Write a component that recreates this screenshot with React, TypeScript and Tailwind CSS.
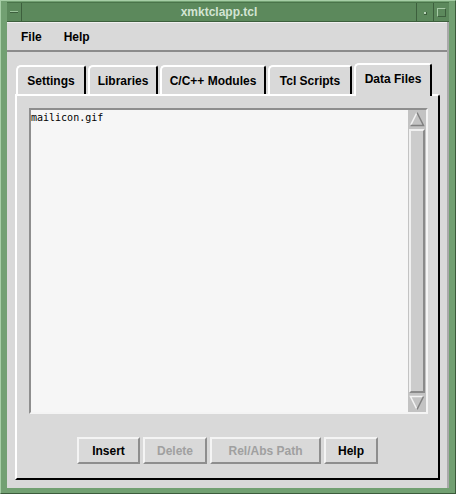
import React from "react";

const font = { fontFamily: '"Liberation Sans", Arial, sans-serif' };

function Tab({ label, w, selected }: { label: string; w: string; selected?: boolean }) {
  if (selected) {
    return (
      <div
        className={`${w} h-[33px] -mb-[2px] relative z-10 bg-[#d9d9d9] border-t-2 border-l-2 border-r-2 border-t-white border-l-white border-r-black rounded-tl-[5px] rounded-tr-[3px] flex items-center justify-center pb-[3px] text-[12px] font-bold text-black`}
      >
        {label}
      </div>
    );
  }
  return (
    <div
      className={`${w} h-[29px] bg-[#d9d9d9] border-t-2 border-l-2 border-r-2 border-t-white border-l-white border-r-black rounded-tl-[5px] rounded-tr-[3px] flex items-center justify-center pt-[1px] text-[12px] font-bold text-black`}
    >
      {label}
    </div>
  );
}

function Btn({ label, w, disabled }: { label: string; w: string; disabled?: boolean }) {
  return (
    <div
      className={`${w} h-[27px] bg-[#d9d9d9] border-2 border-t-[#f4f4f4] border-l-[#f4f4f4] border-b-[#8e8e8e] border-r-[#8e8e8e] flex items-center justify-center text-[12px] font-bold ${
        disabled ? "text-[#a0a0a0]" : "text-black"
      }`}
    >
      {label}
    </div>
  );
}

export default function App() {
  return (
    <div
      className="w-[456px] h-[494px] bg-[#72a072] border border-t-[#a6cea6] border-l-[#a6cea6] border-b-[#3c5c3c] border-r-[#3c5c3c] pl-[6px] pr-[6px] pt-[1px] pb-[5px] flex flex-col"
      style={font}
    >
      {/* title bar */}
      <div className="h-[20px] flex bg-[#5c895c] border-t border-t-[#4a744a] border-b border-b-[#3d5f3d]">
        <div className="w-[15px] border-r border-r-[#3d5f3d] flex items-center justify-center">
          <div className="w-[8px] h-[2px] bg-[#9cc49c] border-b border-b-[#3d5f3d]" />
        </div>
        <div className="flex-1 flex items-center justify-center text-[12px] font-bold text-[#d3e4d3]">
          xmktclapp.tcl
        </div>
        <div className="w-[17px] border-l border-l-[#3d5f3d] flex items-center justify-center">
          <div className="w-[3px] h-[3px] bg-[#b8d4b8] border-r border-b border-[#3d5f3d] mt-[2px]" />
        </div>
        <div className="w-[16px] border-l border-l-[#3d5f3d] flex items-center justify-center">
          <div className="w-[9px] h-[9px] border border-t-[#a8cca8] border-l-[#a8cca8] border-b-[#3d5f3d] border-r-[#3d5f3d]" />
        </div>
      </div>

      {/* content */}
      <div className="flex-1 bg-[#d9d9d9] flex flex-col border-r-2 border-r-[#a9a9a9]">
        {/* menu bar */}
        <div className="h-[30px] border-b-2 border-b-[#8b8b8b] border-t border-t-[#f0f0f0] flex items-center pl-[14px] text-[12px] font-bold text-black">
          <span>File</span>
          <span className="ml-[22px]">Help</span>
        </div>

        {/* tabs */}
        <div className="h-[42px] flex items-end pl-[9px] gap-[2px]">
          <Tab label="Settings" w="w-[70px]" />
          <Tab label="Libraries" w="w-[70px]" />
          <Tab label="C/C++ Modules" w="w-[106px]" />
          <Tab label="Tcl Scripts" w="w-[84px]" />
          <Tab label="Data Files" w="w-[78px]" selected />
        </div>

        {/* panel */}
        <div className="ml-[8px] w-[425px] h-[386px] border-2 border-t-white border-l-white border-r-black border-b-black rounded-tr-[3px] flex flex-col">
          <div className="mt-[12px] ml-[12px] w-[399px] h-[306px] border-2 border-t-[#8e8e8e] border-l-[#8e8e8e] border-b-[#f4f4f4] border-r-[#f4f4f4] flex">
            <div
              className="flex-1 bg-[#f6f6f6] pl-[0px] pt-[1px] text-[10px] leading-[13px] text-black"
              style={{ fontFamily: '"DejaVu Sans Mono", "Liberation Mono", monospace' }}
            >
              mailicon.gif
            </div>
            <div className="w-[18px] bg-[#c3c3c3] flex flex-col">
              <svg width="18" height="18" viewBox="0 0 18 18" className="block">
                <polyline points="2.5,15.5 9,2.5" stroke="#f4f4f4" strokeWidth="1.5" fill="none" />
                <polyline points="9,2.5 15.5,15.5 2.5,15.5" stroke="#808080" strokeWidth="1.5" fill="none" />
              </svg>
              <div className="flex-1 mx-[1px] my-[1px] bg-[#cccccc] border-2 border-t-[#f0f0f0] border-l-[#f0f0f0] border-b-[#8a8a8a] border-r-[#8a8a8a]" />
              <svg width="18" height="18" viewBox="0 0 18 18" className="block">
                <polyline points="15.5,2.5 2.5,2.5 9,15.5" stroke="#f4f4f4" strokeWidth="1.5" fill="none" />
                <polyline points="9,15.5 15.5,2.5" stroke="#808080" strokeWidth="1.5" fill="none" />
              </svg>
            </div>
          </div>
          <div className="mt-[23px] flex justify-center gap-[3px]">
            <Btn label="Insert" w="w-[63px]" />
            <Btn label="Delete" w="w-[64px]" disabled />
            <Btn label="Rel/Abs Path" w="w-[111px]" disabled />
            <Btn label="Help" w="w-[54px]" />
          </div>
        </div>
      </div>
    </div>
  );
}
